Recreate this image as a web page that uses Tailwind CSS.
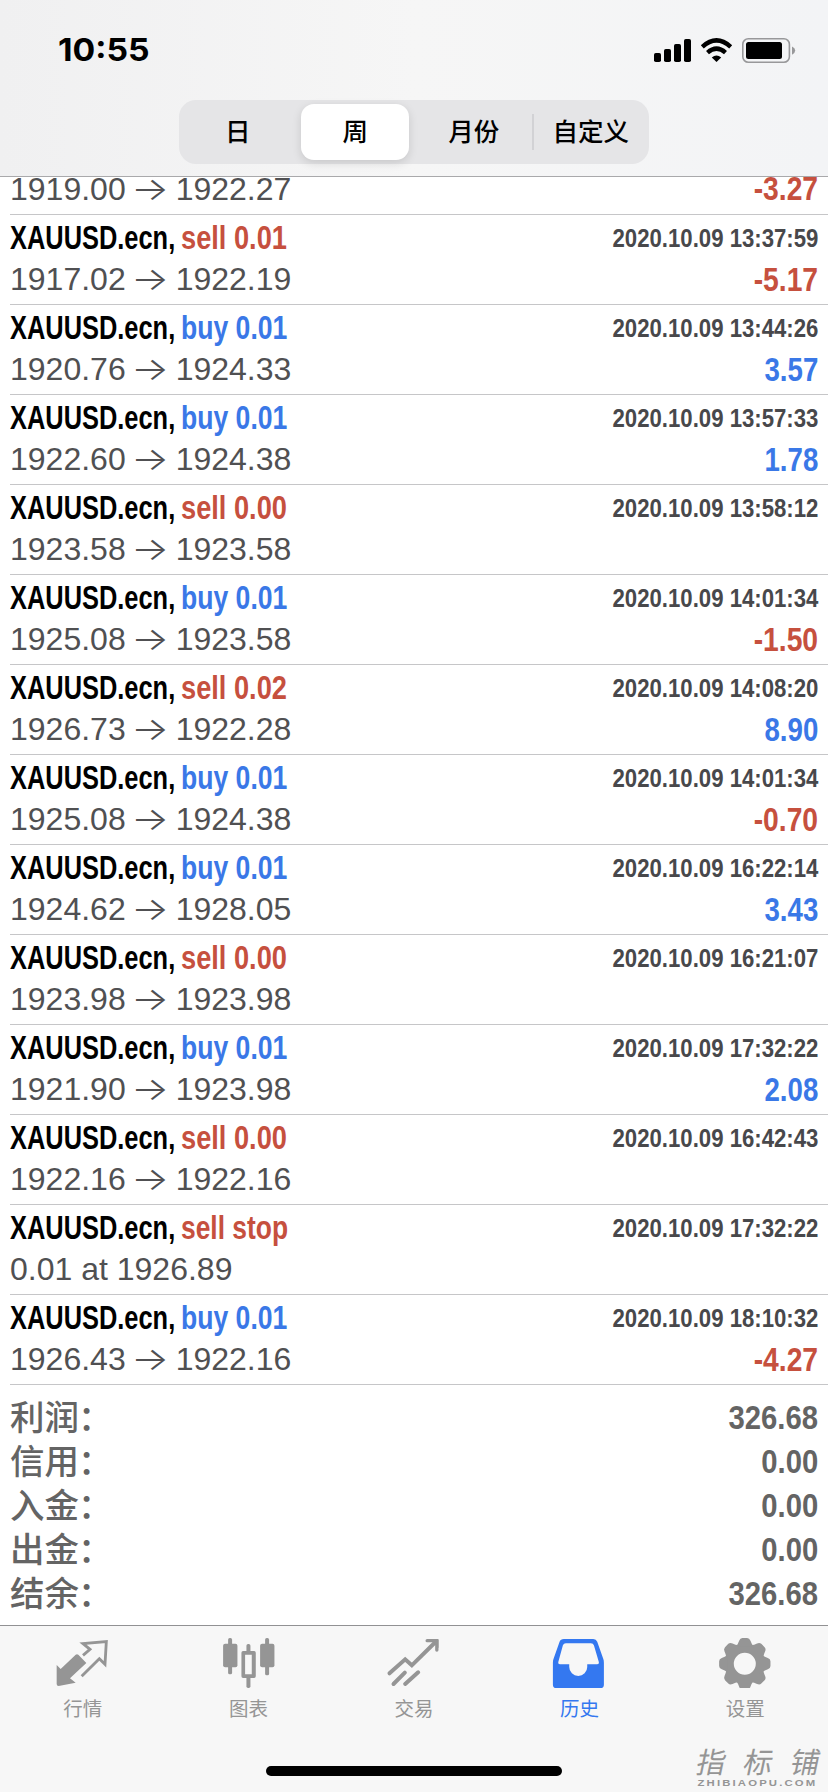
<!DOCTYPE html>
<html lang="zh-CN">
<head>
<meta charset="utf-8">
<title>历史</title>
<script src="https://cdn.jsdelivr.net/npm/@tailwindcss/browser@4"></script>
</head>
<body class="bg-white">
<div class="flex h-[1792px] w-[828px] flex-col overflow-hidden bg-white font-['Liberation_Sans','Noto_Sans_CJK_SC',sans-serif]">

  <header class="flex h-[177px] shrink-0 flex-col items-center border-b border-[#a9a9ab] bg-linear-to-r from-[#f0f0f1] via-[#f6f6f6] to-[#f3f4f6]">
    <div class="flex h-[100px] w-full items-center justify-between pr-[32px] pl-[58px]">
      <div class="origin-left scale-x-[1.07] font-['Inter',sans-serif] text-[31.5px] leading-none font-bold text-black">10:55</div>
      <svg class="h-[26px] w-[143px]" viewBox="652 36 143 26">
        <g fill="#000">
          <rect x="653" y="52" width="7" height="9" rx="1.8"/><rect x="663" y="48" width="7" height="13" rx="1.8"/><rect x="673" y="43" width="7" height="18" rx="1.8"/><rect x="683" y="38" width="7" height="23" rx="1.8"/>
          <path d="M715.5 61 L710.8 56.6 Q715.5 52.6 720.2 56.6Z"/>
          <rect x="745" y="41" width="36" height="17" rx="2.5"/>
        </g>
        <path d="M701.3 45.8 Q715.5 33 729.7 45.8 M706.5 51.6 Q715.5 43.6 724.5 51.6" fill="none" stroke="#000" stroke-width="4.4"/>
        <rect x="741.8" y="37.8" width="46.6" height="23.4" rx="5.5" fill="none" stroke="#98989a" stroke-width="1.6"/>
        <path d="M791 45.5 Q794.2 47 794.2 49.5 Q794.2 52 791 53.8Z" fill="#98989a"/>
      </svg>
    </div>
    <div class="grid h-[64px] w-[470px] grid-cols-4 items-center rounded-[17px] bg-[#e5e5e7] text-center text-[25.5px] font-medium text-black">
      <div>日</div>
      <div class="mx-auto flex h-[56px] w-[108px] items-center justify-center rounded-[13px] bg-white shadow-[0_3px_10px_rgba(0,0,0,0.13)]">周</div>
      <div class="-mr-[2px] flex h-[36px] items-center justify-center border-r-2 border-[#d2d2d5] pl-[2px]">月份</div>
      <div class="pl-[1px]">自定义</div>
    </div>
  </header>

  <main class="flex h-[1208px] shrink-0 flex-col" id="deals">
    <div class="ml-[10px] flex h-[38px] shrink-0 items-end justify-between border-b border-[#c6c6c8] pr-[10px] pb-[9px]">
      <div class="text-[32px] leading-[31px] text-[#505052]" id="first-price">1919.00<span class="mx-[9px] inline-block w-[32px] -translate-x-px scale-x-[1.25] text-center font-['Inter',sans-serif] leading-none font-light">→</span>1922.27</div>
      <div class="origin-right scale-x-[0.87] text-[32.5px] leading-[31px] font-bold text-[#c6503e]">-3.27</div>
    </div>
  </main>

  <section class="flex h-[240px] shrink-0 flex-col pt-[10px] pr-[10px] pl-[10px] text-[34.5px] leading-[44px] text-[#646464]" id="totals"></section>

  <footer class="relative flex grow flex-col border-t border-[#919193] bg-[#f7f7f7]">
    <nav class="grid grid-cols-5 pt-[10px] text-center text-[19.5px] leading-[26px] text-[#959595]">
      <div class="flex flex-col items-center gap-[8px]">
        <svg class="h-[52px] w-[55px]" viewBox="166 48 165 156"><path fill="#959595" d="M171 135 L183 147 L228 104 Q232 101 236 104 L260 129 L211 175 L228 188 L177 198 Q171 198 171 192Z"/><path d="M250 106 L271 88 L250 71 L320 65 L316 133 L299 116 L246 169" fill="none" stroke="#959595" stroke-width="8.5"/></svg>
        <span>行情</span>
      </div>
      <div class="flex flex-col items-center gap-[8px]">
        <svg class="h-[52px] w-[55px]" viewBox="662.7 48 165 156" fill="#959595"><rect x="684" y="54" width="12" height="109" rx="5"/><rect x="669" y="71" width="43" height="71" rx="6"/><rect x="795" y="54" width="12" height="112" rx="5"/><rect x="780" y="71" width="43" height="71" rx="6"/><rect x="739" y="72" width="12" height="26" rx="5"/><rect x="739" y="166" width="12" height="38" rx="5"/><path fill-rule="evenodd" d="M729 93h33q5 0 5 5v71q0 5-5 5h-33q-5 0-5-5v-71q0-5 5-5zM735 104v59h20v-59z"/></svg>
        <span>图表</span>
      </div>
      <div class="flex flex-col items-center gap-[8px]">
        <svg class="h-[52px] w-[55px]" viewBox="49.5 48 165 156" fill="none" stroke="#959595" stroke-width="12"><path stroke-linecap="round" d="M60 160 L107 118 L127 136 L198 66 M72 192 L106 158 M107 192 L146 157"/><path stroke-width="10" d="M173 62 H202 V90" stroke-linecap="round"/><path d="M184 60 H207 V84Z" fill="#959595" stroke="none"/></svg>
        <span>交易</span>
      </div>
      <div class="flex flex-col items-center gap-[8px] text-[#3478f0]">
        <svg class="h-[52px] w-[55px]" viewBox="546.3 48 165 156"><path fill="#3478f0" fill-rule="evenodd" d="M582 57H670Q679 57 682 65L700 116Q702 121 702 128V194Q702 204 692 204H559Q549 204 549 194V128Q549 121 551 116L569 65Q572 57 582 57ZM588 70Q581 70 579 76L565 127Q564 133 570 133H598V141A27 27 0 0 0 652 141V133H682Q688 133 687 127L672 76Q670 70 663 70Z"/></svg>
        <span>历史</span>
      </div>
      <div class="flex flex-col items-center gap-[8px]">
        <svg class="h-[52px] w-[55px]" viewBox="173.1 48 165 156" fill="#959595"><defs><path id="tooth" d="M-26 -52 Q-20 -60 -17 -69 Q-14 -77 -7 -77 H7 Q14 -77 17 -69 Q20 -60 26 -52Z"/></defs><circle cx="253.5" cy="131" r="46" fill="none" stroke="#959595" stroke-width="26"/><g transform="translate(253.5 131)"><use href="#tooth"/><use href="#tooth" transform="rotate(45)"/><use href="#tooth" transform="rotate(90)"/><use href="#tooth" transform="rotate(135)"/><use href="#tooth" transform="rotate(180)"/><use href="#tooth" transform="rotate(225)"/><use href="#tooth" transform="rotate(270)"/><use href="#tooth" transform="rotate(315)"/></g></svg>
        <span>设置</span>
      </div>
    </nav>
    <div class="mx-auto mt-[44px] h-[10px] w-[296px] rounded-full bg-black"></div>
    <div class="absolute right-[8px] bottom-[5px] w-[125px] text-[#959595]">
      <div class="flex -skew-x-12 justify-between pl-[2px] text-[29px] leading-[32px]"><span>指</span><span>标</span><span>铺</span></div>
      <div class="origin-left scale-x-[1.26] pl-[2px] text-[9px] leading-[8px] font-bold tracking-[1.7px]">ZHIBIAOPU.COM</div>
    </div>
  </footer>
</div>

<script>
const arrow = document.querySelector('#first-price span').outerHTML;
const deals = [
  ['sell 0.01', '1917.02>1922.19', '13:37:59', '-5.17'],
  ['buy 0.01', '1920.76>1924.33', '13:44:26', '3.57'],
  ['buy 0.01', '1922.60>1924.38', '13:57:33', '1.78'],
  ['sell 0.00', '1923.58>1923.58', '13:58:12', ''],
  ['buy 0.01', '1925.08>1923.58', '14:01:34', '-1.50'],
  ['sell 0.02', '1926.73>1922.28', '14:08:20', '8.90'],
  ['buy 0.01', '1925.08>1924.38', '14:01:34', '-0.70'],
  ['buy 0.01', '1924.62>1928.05', '16:22:14', '3.43'],
  ['sell 0.00', '1923.98>1923.98', '16:21:07', ''],
  ['buy 0.01', '1921.90>1923.98', '17:32:22', '2.08'],
  ['sell 0.00', '1922.16>1922.16', '16:42:43', ''],
  ['sell stop', '0.01 at 1926.89', '17:32:22', ''],
  ['buy 0.01', '1926.43>1922.16', '18:10:32', '-4.27'],
];
document.getElementById('deals').insertAdjacentHTML('beforeend', deals.map(([side, price, time, profit]) => `
  <div class="ml-[10px] flex h-[90px] shrink-0 justify-between border-b border-[#c6c6c8] pt-[3px] pr-[10px]">
    <div class="flex flex-col gap-px whitespace-nowrap">
      <div class="flex text-[33px] leading-[40px] font-bold">
        <div class="w-[171px]"><span class="inline-block origin-left scale-x-[0.77] text-black">XAUUSD.ecn,</span></div>
        <span class="inline-block origin-left ${side.startsWith('buy') ? 'scale-x-[0.805] text-[#3a78e7]' : side === 'sell stop' ? 'scale-x-[0.8] text-[#c6503e]' : 'scale-x-[0.825] text-[#c6503e]'}">${side}</span>
      </div>
      <div class="text-[32px] leading-[40px] text-[#505052]">${price.replace('>', arrow)}</div>
    </div>
    <div class="flex flex-col items-end gap-[2px] font-bold whitespace-nowrap">
      <div class="origin-right scale-x-[0.853] text-[26px] leading-[40px] text-[#48484b]">2020.10.09 ${time}</div>
      <div class="origin-right text-[32.5px] leading-[40px] ${profit.startsWith('-') ? 'scale-x-[0.87] text-[#c6503e]' : 'scale-x-[0.85] text-[#3a78e7]'}">${profit}</div>
    </div>
  </div>`).join(''));
document.getElementById('totals').innerHTML = [['利润', '326.68'], ['信用', '0.00'], ['入金', '0.00'], ['出金', '0.00'], ['结余', '326.68']].map(([k, v]) => `
  <div class="flex h-[44px] items-center justify-between"><span class="pt-[2px] font-medium">${k}<span class="-ml-px">：</span></span><span class="origin-right scale-x-[0.86] text-[34px] font-bold">${v}</span></div>`).join('');
</script>
</body>
</html>
